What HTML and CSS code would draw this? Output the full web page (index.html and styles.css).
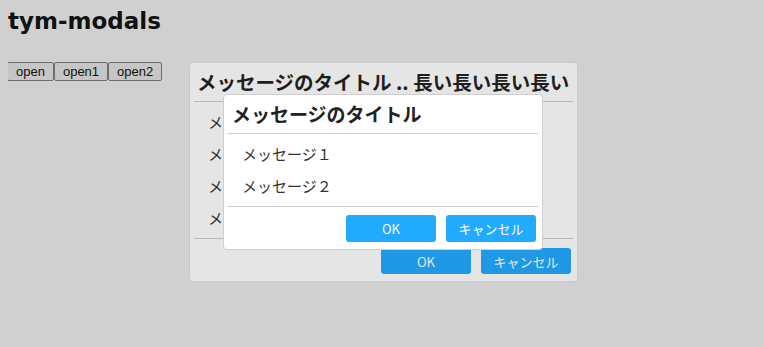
FILE: index.html
```html
<!DOCTYPE html>
<html lang="ja">
<head>
<meta charset="utf-8">
<title>tym-modals</title>
<link rel="stylesheet" href="styles.css">
</head>
<body>
<h1 class="page-title">tym-modals</h1>
<div class="openers">
  <button class="opener">open</button><button class="opener">open1</button><button class="opener">open2</button>
</div>

<div class="modal modal-back">
  <div class="modal-title">メッセージのタイトル .. 長い長い長い長い</div>
  <div class="modal-body">
    <div class="row">メッセージ１</div>
    <div class="row">メッセージ２</div>
    <div class="row">メッセージ３</div>
    <div class="row">メッセージ４</div>
  </div>
  <div class="modal-foot">
    <button class="btn">OK</button>
    <button class="btn">キャンセル</button>
  </div>
</div>

<div class="modal modal-front">
  <div class="modal-title">メッセージのタイトル</div>
  <div class="modal-body">
    <div class="row">メッセージ１</div>
    <div class="row">メッセージ２</div>
  </div>
  <div class="modal-foot">
    <button class="btn">OK</button>
    <button class="btn">キャンセル</button>
  </div>
</div>
</body>
</html>
```

FILE: styles.css
```css
html, body {
  background: #d0d0d0;
}
body {
  margin: 8px;
  font-family: "Noto Sans CJK JP", "DejaVu Sans", sans-serif;
  color: #222;
}
.page-title {
  margin: 0;
  font-family: "DejaVu Sans", "Noto Sans CJK JP", sans-serif;
  font-weight: bold;
  font-size: 23px;
  line-height: 26px;
  color: #111;
}
.openers {
  display: flex;
  margin-top: 28px;
  margin-left: -1px;
}
.opener {
  font-family: "Liberation Sans", Arial, sans-serif;
  font-size: 13px;
  line-height: 15px;
  height: 19px;
  padding: 1px 8px;
  margin: 0;
  background: #c6c6c6;
  border: 1px solid #6e6e6e;
  border-radius: 2px;
  color: #111;
}
.modal {
  position: absolute;
  box-sizing: border-box;
  padding: 0 4px;
  border-radius: 4px;
  display: flex;
  flex-direction: column;
}
.modal-back {
  left: 189px;
  top: 62px;
  width: 389px;
  height: 220px;
  background: #e5e5e5;
  border: 1px solid #c8c8c8;
}
.modal-front {
  left: 223px;
  top: 94px;
  width: 320px;
  height: 156px;
  background: #ffffff;
  border: 1px solid #cfcfcf;
}
.modal-title {
  white-space: nowrap;
  font-weight: bold;
  font-size: 19px;
  line-height: 38px;
  height: 38px;
  padding-left: 4px;
  border-bottom: 1px solid #cccccc;
}
.modal-back .modal-title {
  font-size: 19.5px;
  padding-left: 3px;
  border-bottom-color: #b8b8b8;
  color: #1e1e1e;
}
.modal-body {
  padding: 4px 0;
  border-bottom: 1px solid #cccccc;
}
.modal-back .modal-body {
  border-bottom-color: #b8b8b8;
}
.row {
  height: 32px;
  line-height: 32px;
  font-size: 15px;
  padding-left: 14px;
  color: #333;
  white-space: nowrap;
}
.modal-back .row {
  color: #2a2a2a;
}
.modal-foot {
  display: flex;
  justify-content: flex-end;
  gap: 10px;
  padding: 8px 2px 0 0;
}
.btn {
  width: 90px;
  height: 27px;
  margin: 0;
  padding: 0;
  border: none;
  border-radius: 3px;
  background: #22aaff;
  color: #ffffff;
  font-family: "Noto Sans CJK JP", "DejaVu Sans", sans-serif;
  font-size: 13px;
}
.modal-back .modal-foot {
  padding-top: 9px;
  padding-right: 2px;
}
.modal-back .btn {
  height: 26px;
  background: #1f99e6;
  color: #e6e6e6;
}
```
